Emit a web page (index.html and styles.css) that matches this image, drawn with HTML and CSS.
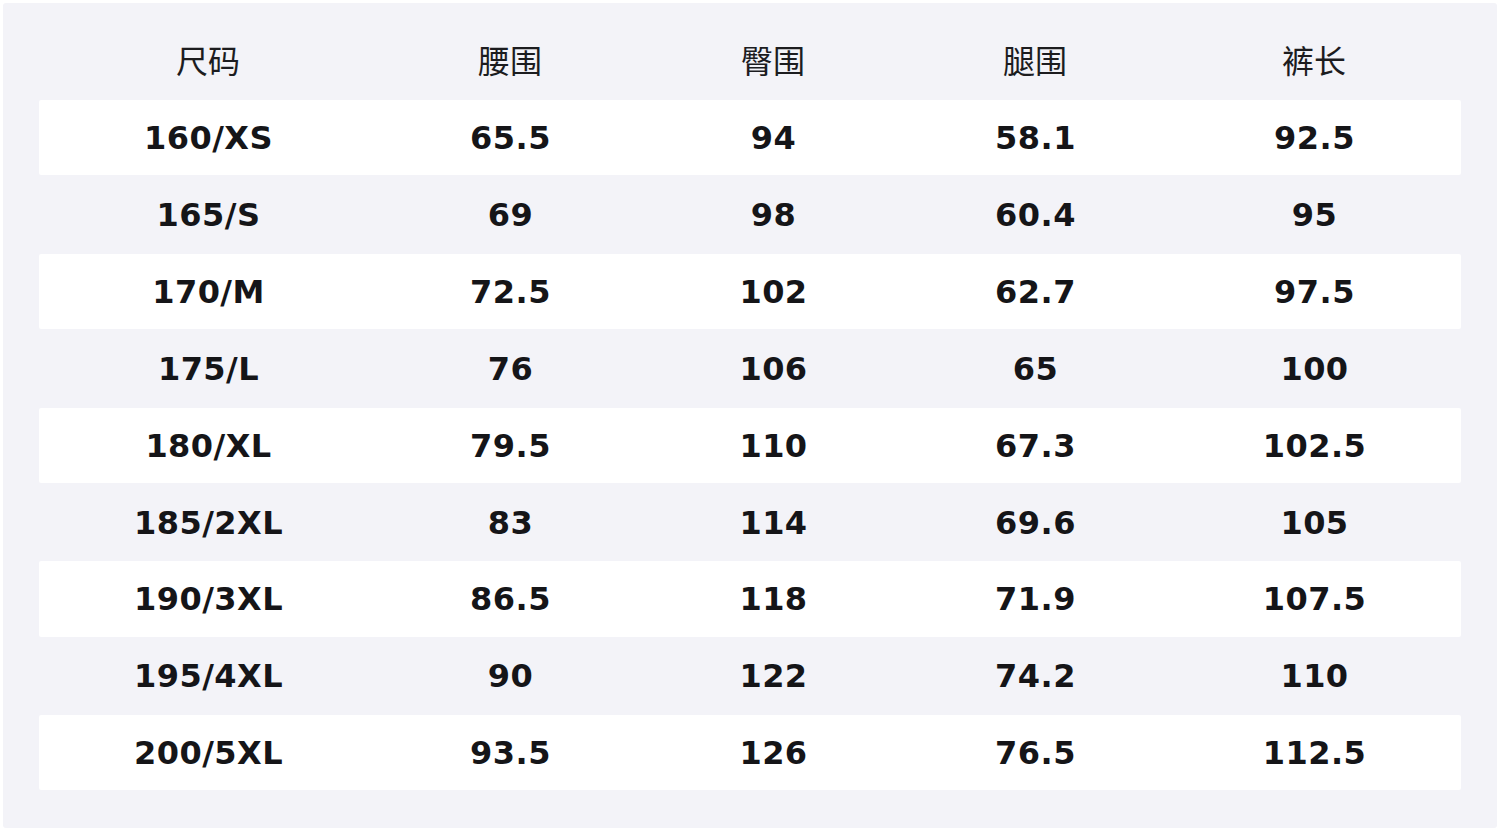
FILE: index.html
```html
<!DOCTYPE html>
<html lang="zh-CN">
<head>
<meta charset="utf-8">
<title>尺码表</title>
<link rel="stylesheet" href="styles.css">
</head>
<body>
<div class="panel">
  <div class="row head"><div>尺码</div><div>腰围</div><div>臀围</div><div>腿围</div><div>裤长</div></div>
  <div class="row odd"><div>160/XS</div><div>65.5</div><div>94</div><div>58.1</div><div>92.5</div></div>
  <div class="row"><div>165/S</div><div>69</div><div>98</div><div>60.4</div><div>95</div></div>
  <div class="row odd"><div>170/M</div><div>72.5</div><div>102</div><div>62.7</div><div>97.5</div></div>
  <div class="row"><div>175/L</div><div>76</div><div>106</div><div>65</div><div>100</div></div>
  <div class="row odd"><div>180/XL</div><div>79.5</div><div>110</div><div>67.3</div><div>102.5</div></div>
  <div class="row"><div>185/2XL</div><div>83</div><div>114</div><div>69.6</div><div>105</div></div>
  <div class="row odd"><div>190/3XL</div><div>86.5</div><div>118</div><div>71.9</div><div>107.5</div></div>
  <div class="row"><div>195/4XL</div><div>90</div><div>122</div><div>74.2</div><div>110</div></div>
  <div class="row odd"><div>200/5XL</div><div>93.5</div><div>126</div><div>76.5</div><div>112.5</div></div>
</div>
</body>
</html>
```
FILE: styles.css
```css
html, body {
  margin: 0;
  padding: 0;
  background: #ffffff;
}
body {
  padding: 3px;
  width: 1494px;
}
.panel {
  background: #f3f3f8;
  border-radius: 3px;
  padding: 22px 36px 38px 36px;
  display: flex;
  flex-direction: column;
  gap: 1.75px;
  font-family: "DejaVu Sans", "Noto Sans CJK SC", sans-serif;
  color: #151518;
}
.row {
  display: grid;
  grid-template-columns: 338px 266px 260px 264px 294px;
  height: 75.2px;
  align-items: center;
  text-align: center;
  font-size: 32px;
  font-weight: bold;
  letter-spacing: 0.45px;
  border-radius: 2px;
}
.row div {
  padding-top: 1px;
  padding-left: 1px;
}
.row.odd {
  background: #ffffff;
}
.row.head {
  font-family: "Noto Sans CJK SC", sans-serif;
  font-weight: normal;
  letter-spacing: 0;
  color: #1c1c1f;
  height: 73px;
}
.row.head div {
  padding-top: 0;
  padding-left: 0;
  padding-bottom: 5px;
}
```
